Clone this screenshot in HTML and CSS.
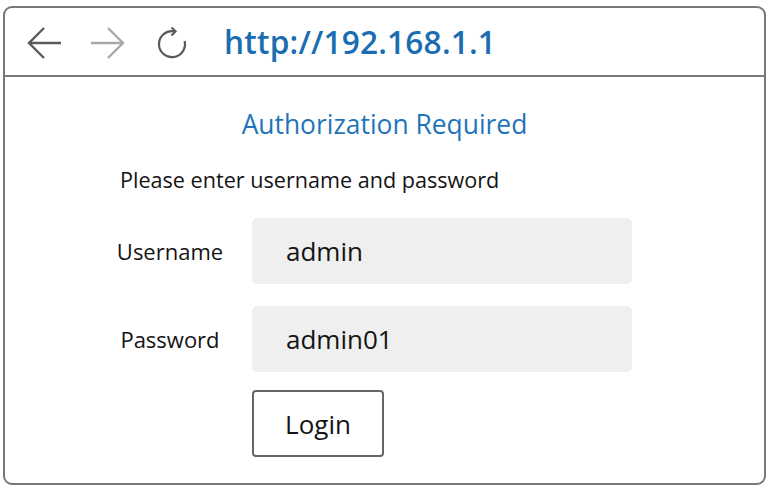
FILE: index.html
```html
<!DOCTYPE html>
<html>
<head>
<meta charset="utf-8">
<link rel="stylesheet" href="styles.css">
</head>
<body>
<div class="window">
  <div class="toolbar">
    <svg class="nav back" width="36" height="36" viewBox="0 0 36 36"><path d="M35 18 H3 M18 3 L3 18 L18 33" fill="none" stroke="#5a5a5a" stroke-width="2.4" stroke-linejoin="miter"/></svg>
    <svg class="nav fwd" width="36" height="36" viewBox="0 0 36 36"><path d="M1 18 H33 M18 3 L33 18 L18 33" fill="none" stroke="#a9a9a9" stroke-width="2.4"/></svg>
    <svg class="nav reload" width="34" height="34" viewBox="0 0 34 34"><path d="M19 5.3 A13 13 0 1 0 29.6 15" fill="none" stroke="#5a5a5a" stroke-width="2.2"/><path d="M16.5 1.5 L20.5 5.3 L16.5 9.5" fill="none" stroke="#5a5a5a" stroke-width="2.2"/></svg>
    <span class="url">http://192.168.1.1</span>
  </div>
  <div class="content">
    <h1 class="title">Authorization Required</h1>
    <p class="intro">Please enter username and password</p>
    <div class="form">
      <label class="label">Username</label>
      <div class="field">admin</div>
      <label class="label">Password</label>
      <div class="field">admin01</div>
      <span></span>
      <div class="actions"><button class="login">Login</button></div>
    </div>
  </div>
</div>
</body>
</html>
```
FILE: styles.css
```css
html, body {
  margin: 0;
  padding: 0;
  background: #ffffff;
}
body {
  font-family: "Open Sans", "Noto Sans", sans-serif;
  color: #141414;
}
.window {
  margin: 6px 0 0 3px;
  width: 759px;
  height: 475px;
  border: 2px solid #777777;
  border-radius: 9px;
  display: flex;
  flex-direction: column;
}
.toolbar {
  height: 69px;
  border-bottom: 2px solid #7a7a7a;
  display: flex;
  align-items: center;
  padding-left: 21px;
  box-sizing: border-box;
  flex-shrink: 0;
}
.nav {
  display: block;
  flex-shrink: 0;
}
.back { margin-top: 2px; }
.fwd { margin-left: 28px; margin-top: 2px; }
.reload { margin-left: 29px; margin-top: 2px; }
.url {
  margin-left: 35px;
  font-size: 31.6px;
  font-weight: 600;
  color: #1b6db1;
  letter-spacing: 0.2px;
}
.content {
  flex: 1;
  display: flex;
  flex-direction: column;
}
.title {
  margin: 30px 0 0 0;
  text-align: center;
  font-size: 26.4px;
  font-weight: 400;
  line-height: 34px;
  color: #1f74ba;
}
.intro {
  margin: 24px 0 0 115px;
  font-size: 21.6px;
  line-height: 30px;
  color: #141414;
}
.form {
  margin: 23px 0 0 103px;
  display: grid;
  grid-template-columns: 124px 380px;
  column-gap: 20px;
  row-gap: 22px;
  align-items: center;
}
.label {
  text-align: center;
  font-size: 22px;
  color: #141414;
}
.field {
  height: 66px;
  background: #efefef;
  border-radius: 5px;
  display: flex;
  align-items: center;
  padding-left: 34px;
  font-size: 26px;
  color: #141414;
}
.actions {
  margin-top: -4px;
}
.login {
  width: 132px;
  height: 67px;
  border: 2px solid #666666;
  border-radius: 4px;
  background: #ffffff;
  font-family: "Open Sans", "Noto Sans", sans-serif;
  font-size: 26px;
  color: #141414;
  padding: 0;
}
```
